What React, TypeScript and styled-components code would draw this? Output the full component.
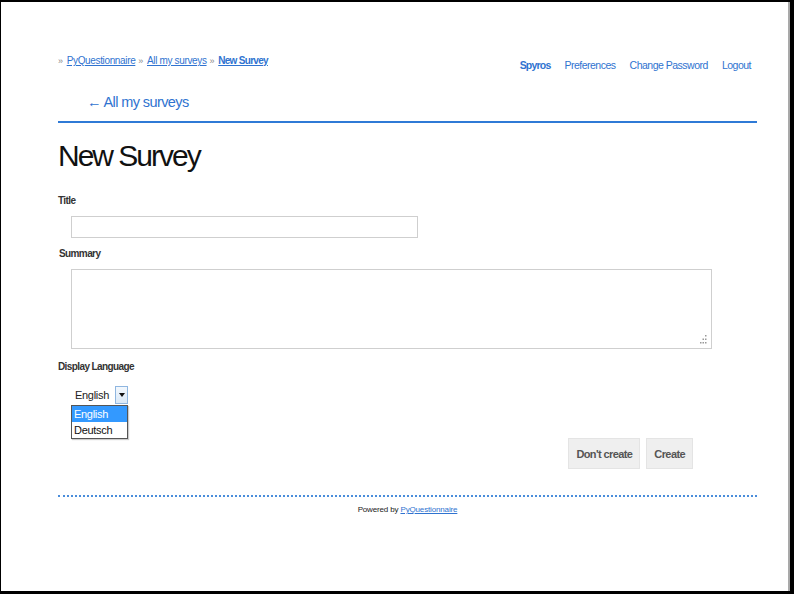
import React from 'react';
import styled, { createGlobalStyle } from 'styled-components';

const GlobalStyle = createGlobalStyle`
  html, body {
    margin: 0;
    padding: 0;
    background: #fff;
  }
  body {
    font-family: "Liberation Sans", Arial, sans-serif;
    color: #111;
  }
`;

const Frame = styled.div`
  box-sizing: border-box;
  width: 794px;
  height: 594px;
  border-style: solid;
  border-color: #000;
  border-width: 2px 4px 3px 1px;
  box-shadow: inset -2px 0 0 #a9a9a9;
  overflow: hidden;
`;

const Page = styled.div`
  width: 699px;
  padding: 52px 0 0 57px;
`;

const Header = styled.header`
  display: flex;
  justify-content: space-between;
  align-items: flex-start;
`;

const Crumbs = styled.nav`
  display: flex;
  align-items: center;
  gap: 3px;
  font-size: 10px;
  letter-spacing: -0.35px;
  line-height: 14px;
`;

const Sep = styled.span`
  color: #888;
  font-size: 9px;
  margin: 0 1px 0 0;
`;

const CrumbLink = styled.a<{ $current?: boolean }>`
  color: #2f73d0;
  text-decoration: underline;
  font-weight: ${(p) => (p.$current ? 'bold' : 'normal')};
  letter-spacing: ${(p) => (p.$current ? '-0.7px' : 'inherit')};
  cursor: pointer;
`;

const UserNav = styled.nav`
  display: flex;
  gap: 14px;
  padding: 4px 6px 0 0;
  font-size: 10.5px;
  letter-spacing: -0.5px;
  line-height: 14px;
`;

const NavLink = styled.a<{ $strong?: boolean }>`
  color: #2f73d0;
  text-decoration: none;
  font-weight: ${(p) => (p.$strong ? 'bold' : 'normal')};
  letter-spacing: ${(p) => (p.$strong ? '-0.8px' : 'inherit')};
`;

const BackLink = styled.a`
  display: inline-block;
  margin: 20px 0 0 29px;
  font-size: 14.5px;
  letter-spacing: -0.6px;
  line-height: 20px;
  color: #2f73d0;
  text-decoration: none;
`;

const Rule = styled.hr`
  border: 0;
  border-top: 2px solid #2f7ad6;
  margin: 9px 0 0;
`;

const Title = styled.h1`
  font-size: 30px;
  letter-spacing: -2px;
  font-weight: normal;
  line-height: 38px;
  margin: 14px 0 0;
  color: #111;
`;

const Form = styled.form`
  display: flex;
  flex-direction: column;
  margin-top: 19px;
`;

const Label = styled.label<{ $indent?: number }>`
  font-size: 10px;
  letter-spacing: -0.6px;
  font-weight: bold;
  color: #333;
  line-height: 14px;
  margin-left: ${(p) => p.$indent ?? 0}px;
`;

const Field = styled.div`
  padding: 8px 0 0 13px;
`;

const TextInput = styled.input`
  box-sizing: border-box;
  width: 347px;
  height: 22px;
  border: 1px solid #cfcfcf;
  margin: 0 0 9px;
  display: block;
`;

const AreaWrap = styled.div`
  position: relative;
  width: 641px;
  margin: 0 0 11px;
`;

const TextArea = styled.textarea`
  box-sizing: border-box;
  width: 641px;
  height: 80px;
  border: 1px solid #cfcfcf;
  display: block;
  resize: none;
`;

const Grip = styled.svg`
  position: absolute;
  right: 5px;
  bottom: 5px;
`;

const SelectWrap = styled.div`
  position: relative;
  width: 57px;
  margin-top: 3px;
`;

const SelectBox = styled.div`
  box-sizing: border-box;
  display: flex;
  align-items: center;
  justify-content: space-between;
  height: 19px;
  padding: 0 0 0 4px;
  font-size: 11px;
  letter-spacing: -0.3px;
  color: #222;
`;

const Arrow = styled.span`
  box-sizing: border-box;
  width: 13px;
  height: 18px;
  border: 1px solid #8fb6e0;
  background: linear-gradient(#f3f8fd, #d9e8f7);
  display: flex;
  align-items: center;
  justify-content: center;
  &::after {
    content: '';
    border-left: 3px solid transparent;
    border-right: 3px solid transparent;
    border-top: 4px solid #111;
  }
`;

const Options = styled.ul`
  position: absolute;
  left: 0;
  top: 20px;
  box-sizing: border-box;
  width: 57px;
  margin: 0;
  padding: 0;
  list-style: none;
  border: 1px solid #555;
  background: #fff;
  box-shadow: 1px 1px 1px rgba(0, 0, 0, 0.2);
  font-size: 11px;
  letter-spacing: -0.3px;
`;

const Option = styled.li<{ $selected?: boolean }>`
  padding: 0 2px;
  height: 16px;
  line-height: 16px;
  background: ${(p) => (p.$selected ? '#3399ff' : '#fff')};
  color: ${(p) => (p.$selected ? '#fff' : '#111')};
`;

const Actions = styled.div`
  display: flex;
  justify-content: flex-end;
  gap: 6px;
  margin: 34px 64px 0 0;
`;

const Button = styled.button`
  height: 31px;
  padding: 0 7px;
  border: 1px solid #e4e4e4;
  background: #efefef;
  color: #555;
  font-family: inherit;
  font-size: 11px;
  letter-spacing: -0.6px;
  font-weight: bold;
`;

const Footer = styled.footer`
  margin-top: 26px;
  border-top: 2px dotted #4a8ddb;
  padding-top: 8px;
  text-align: center;
  font-size: 8px;
  letter-spacing: -0.15px;
  line-height: 10px;
  color: #222;
`;

const FooterLink = styled.a`
  color: #2f73d0;
  text-decoration: underline;
`;

const App: React.FC = () => {
  return (
    <Frame>
      <GlobalStyle />
      <Page>
        <Header>
          <Crumbs>
            <Sep>»</Sep>
            <CrumbLink>PyQuestionnaire</CrumbLink>
            <Sep>»</Sep>
            <CrumbLink>All my surveys</CrumbLink>
            <Sep>»</Sep>
            <CrumbLink $current>New Survey</CrumbLink>
          </Crumbs>
          <UserNav>
            <NavLink $strong>Spyros</NavLink>
            <NavLink>Preferences</NavLink>
            <NavLink>Change Password</NavLink>
            <NavLink>Logout</NavLink>
          </UserNav>
        </Header>

        <BackLink>← All my surveys</BackLink>
        <Rule />

        <Title>New Survey</Title>

        <Form>
          <Label>Title</Label>
          <Field>
            <TextInput type="text" />
          </Field>

          <Label $indent={1}>Summary</Label>
          <Field>
            <AreaWrap>
              <TextArea />
              <Grip width="7" height="9" viewBox="0 0 7 9">
                <g fill="#999">
                  <rect x="5" y="0" width="1.5" height="1.5" />
                  <rect x="2.5" y="3.5" width="1.5" height="1.5" />
                  <rect x="5" y="3.5" width="1.5" height="1.5" />
                  <rect x="0" y="7" width="1.5" height="1.5" />
                  <rect x="2.5" y="7" width="1.5" height="1.5" />
                  <rect x="5" y="7" width="1.5" height="1.5" />
                </g>
              </Grip>
            </AreaWrap>
          </Field>

          <Label>Display Language</Label>
          <Field>
            <SelectWrap>
              <SelectBox>
                English
                <Arrow />
              </SelectBox>
              <Options>
                <Option $selected>English</Option>
                <Option>Deutsch</Option>
              </Options>
            </SelectWrap>
          </Field>

          <Actions>
            <Button type="button">Don't create</Button>
            <Button type="button">Create</Button>
          </Actions>
        </Form>

        <Footer>
          Powered by <FooterLink>PyQuestionnaire</FooterLink>
        </Footer>
      </Page>
    </Frame>
  );
};

export default App;
